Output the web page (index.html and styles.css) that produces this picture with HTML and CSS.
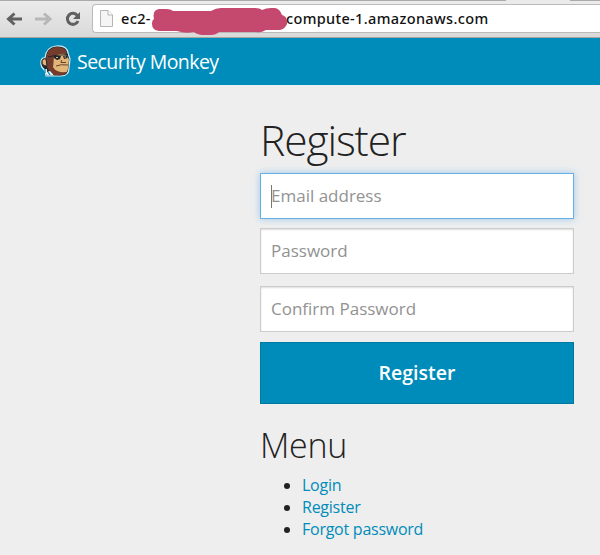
FILE: index.html
```html
<!DOCTYPE html>
<html lang="en">
<head>
<meta charset="utf-8">
<title>Security Monkey</title>
<link rel="stylesheet" href="styles.css">
</head>
<body>
<div class="toolbar">
  <svg class="nav-icons" width="92" height="34" viewBox="0 0 92 34" fill="none">
    <path class="back" d="M22 15H9M14.500 9.500L8.500 15L14.500 20.500"/>
    <path class="forward" d="M35 15H49M44 9.500L50 15L44 20.500"/>
    <path class="reload" d="M77.300 11.500A5.500 5.500 0 1 0 78 17"/>
    <path class="reload-tip" d="M80 8V15H73Z"/>
  </svg>
  <div class="address">
    <svg class="page-icon" width="13" height="17" viewBox="0 0 13 17">
      <path d="M.5.5H8L12.500 5V16.500H.5Z" fill="#f5f5f5" stroke="#b5b5b5"/>
      <path d="M8 .5V5H12.500" fill="#fff" stroke="#b5b5b5"/>
    </svg>
    <span class="host-start">ec2-</span>
    <span class="host-end">compute-1.amazonaws.com</span>
    <svg class="scribble" width="136" height="30" viewBox="0 0 136 30">
      <path d="M3 14Q1 5 8 4H15Q20 4 22 6H60Q65 3 70 3H104Q109 3 111 5Q115 3 120 3H124Q129 4 131 10Q137 12 136 19Q134 24 129 25H115Q110 28 105 27H68Q65 30 60 30H51Q45 29 43 27Q34 29 26 26H8Q1 25 1 19Q1 15 3 14Z" fill="#c5486f"/>
    </svg>
  </div>
</div>
<header class="navbar">
  <svg class="logo" width="33" height="34" viewBox="0 0 33 34">
    <path d="M6 14Q7 3 17 2Q28 1 29 9L31 15L30 24Q30 32 22 32H7L6 26Q1 23 2 17Q3 13 6 14Z" fill="#1f272c" stroke="#cfe9f2" stroke-width="1.200"/>
    <path d="M7 15Q8 4 17 3Q26 2 28 9L16 12L14 21L17 28L22 31H15Q11 29 8 23Z" fill="#743c2d"/>
    <path d="M15 13Q20 9 28 10L30 16L29 24Q29 29 24 29Q17 29 14 23Z" fill="#e3b678"/>
    <path d="M14 24Q18 29 28 28Q25 32 18 31Z" fill="#743c2d"/>
    <path d="M7 15Q3 14 3 18Q3 22 8 22Z" fill="#e3b678" stroke="#29272a"/>
    <path d="M4 25H8V28L11 27L15 31.500H8Z" fill="#e4f5fb"/>
    <path d="M6 25V29M9 28L11 31" stroke="#0785b0" stroke-width="1.300"/>
    <path d="M9 13L16 11.500L29 10.500" fill="none" stroke="#252327"/>
    <path d="M15 12L22 12L21 15L18 16L15 14ZM24 12L29 11L28.500 14L25 15Z" fill="#252327"/>
    <path d="M17 13.500H19M25.500 13H27" stroke="#c9c6a7"/>
    <path d="M22.500 16L22 18.500L27 18.500M17 22Q22 20 29 21" fill="none" stroke="#674330"/>
  </svg>
  <span class="brand">Security Monkey</span>
</header>
<main class="content">
  <h1>Register</h1>
  <form>
    <div class="field focused"><input type="text" placeholder="Email address" aria-label="Email address"><i class="caret"></i></div>
    <div class="field"><input type="password" placeholder="Password" aria-label="Password"></div>
    <div class="field confirm"><input type="password" placeholder="Confirm Password" aria-label="Confirm Password"></div>
    <button type="button">Register</button>
  </form>
  <h2>Menu</h2>
  <ul>
    <li><a href="#">Login</a></li>
    <li><a href="#">Register</a></li>
    <li><a href="#">Forgot password</a></li>
  </ul>
</main>
</body>
</html>
```

FILE: styles.css
```css
* { box-sizing: border-box; }
body {
  margin: 0;
  height: 555px;
  overflow: hidden;
  background: #eee;
  color: #222;
  font-family: "Open Sans", sans-serif;
}
.toolbar {
  height: 38px;
  display: flex;
  padding-top: 5px;
  background:
    linear-gradient(90deg, #aaa 506px, #e9e9e9 506px, #e9e9e9 570px, #aaa 570px) top / 100% 1px no-repeat,
    linear-gradient(#ececec, #d9d9d9);
  border-bottom: 1px solid #a8a49f;
}
.nav-icons { flex: none; margin-top: -1px; }
.nav-icons path { stroke-width: 3; }
.back { stroke: #606060; }
.forward { stroke: #b7b7b7; }
.reload { stroke: #606060; }
.nav-icons .reload-tip { fill: #606060; stroke: none; }
.address {
  position: relative;
  flex: 1;
  height: 29px;
  margin-top: -1px;
  display: flex;
  align-items: center;
  background: #fff;
  border: 1px solid #bbb;
  border-right: 0;
  border-radius: 4px 0 0 4px;
  color: #111;
  font: 500 14.500px/27px "Noto Sans", sans-serif;
  white-space: nowrap;
}
.page-icon { margin-left: 7px; flex: none; }
.host-start { width: 165px; margin-left: 8px; letter-spacing: .35px; }
.host-end { letter-spacing: .35px; }
.scribble { position: absolute; left: 58px; top: 0; }
.navbar {
  height: 47px;
  display: flex;
  align-items: center;
  padding-left: 39px;
  background: #008cba;
  color: #fff;
}
.logo { flex: none; margin-top: -2px; }
.brand { margin-left: 5px; font-size: 19.500px; font-weight: 400; letter-spacing: -.55px; }
.content { width: 314px; margin-left: 260px; }
h1, h2 { margin: 0; font-weight: 300; }
h1 { height: 88px; padding-top: 26px; font-size: 42.500px; line-height: 58px; letter-spacing: -1.100px; }
.field {
  position: relative;
  height: 46px;
  margin-bottom: 10px;
  border: 1px solid #ccc;
  background: #fff;
  box-shadow: inset 0 1px 2px #0002;
}
.field + .field { margin-bottom: 12px; }
.field.focused { margin-bottom: 9px; border-color: #66afe9; box-shadow: 0 0 7px #66afe999; }
.field.confirm { margin-bottom: 10px; }
input {
  display: block;
  width: 100%;
  height: 44px;
  padding: 0 10px 2px;
  border: 0;
  background: transparent;
  font: 17px "Open Sans", sans-serif;
}
input::placeholder { color: #929292; opacity: 1; }
.caret { position: absolute; left: 10px; top: 11px; width: 1px; height: 23px; background: #777; }
button {
  display: block;
  width: 314px;
  height: 62px;
  padding: 0 0 2px;
  border: 1px solid #0079a1;
  background: #008cba;
  color: #fff;
  font: 600 19.500px "Open Sans", sans-serif;
}
h2 { margin-top: 18px; font-size: 34px; line-height: 46px; letter-spacing: -.3px; }
ul { margin: 6px 0 0; padding-left: 42px; font-size: 16px; line-height: 22px; letter-spacing: -.25px; }
a { color: #008cba; text-decoration: none; }
```
